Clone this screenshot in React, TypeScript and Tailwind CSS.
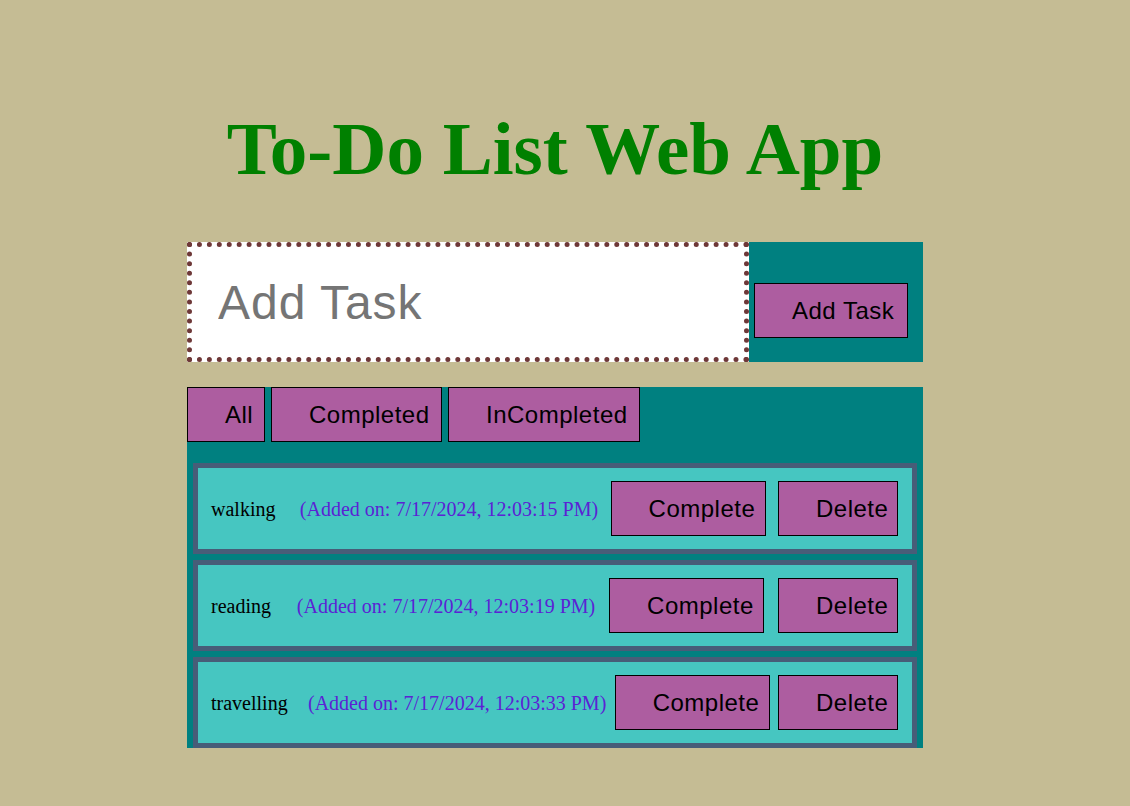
import React, { useState } from "react";

type Task = { id: number; name: string; added: string; done: boolean };

const initialTasks: Task[] = [
  { id: 1, name: "walking", added: "7/17/2024, 12:03:15 PM", done: false },
  { id: 2, name: "reading", added: "7/17/2024, 12:03:19 PM", done: false },
  { id: 3, name: "travelling", added: "7/17/2024, 12:03:33 PM", done: false },
];

const btn =
  "h-[55px] border border-black bg-[#ad5da0] pl-[37px] text-left text-[24px] tracking-[0.5px] text-black font-['Liberation_Sans',Arial,sans-serif]";

const App: React.FC = () => {
  const [tasks, setTasks] = useState<Task[]>(initialTasks);
  const [text, setText] = useState("");
  const [filter, setFilter] = useState<"all" | "done" | "todo">("all");

  const addTask = () => {
    if (!text.trim()) return;
    setTasks([
      ...tasks,
      { id: Date.now(), name: text.trim(), added: new Date().toLocaleString("en-US"), done: false },
    ]);
    setText("");
  };

  const shown = tasks.filter((t) =>
    filter === "all" ? true : filter === "done" ? t.done : !t.done
  );

  return (
    <div className="min-h-screen bg-[#c5bc94] pt-[111px]">
      <div className="ml-[187px] w-[736px]">
        <h1 className="text-center text-[75px] leading-[75px] font-bold text-[#008000] font-['Liberation_Serif','Times_New_Roman',serif]">
          To-Do List Web App
        </h1>

        <div className="mt-[56px] flex h-[120px] items-start bg-[#008080]">
          <input
            value={text}
            onChange={(e) => setText(e.target.value)}
            placeholder="Add Task"
            className="h-[120px] w-[562px] border-[5px] border-dotted border-[#6e3838] bg-white pl-[26px] text-[48px] tracking-[1px] text-black outline-none placeholder:text-[#757575] font-['Liberation_Sans',Arial,sans-serif]"
          />
          <button onClick={addTask} className={`${btn} ml-[5px] mt-[41px] w-[154px]`}>
            Add Task
          </button>
        </div>

        <div className="mt-[25px] bg-[#008080]">
          <div className="flex gap-[6px]">
            <button onClick={() => setFilter("all")} className={`${btn} w-[78px]`}>
              All
            </button>
            <button onClick={() => setFilter("done")} className={`${btn} w-[171px]`}>
              Completed
            </button>
            <button onClick={() => setFilter("todo")} className={`${btn} w-[192px]`}>
              InCompleted
            </button>
          </div>

          <ul className="mt-[21px] flex flex-col gap-[6px] px-[6px]">
            {shown.map((t) => (
              <li
                key={t.id}
                className="flex h-[91px] items-center justify-between border-[5px] border-[#475d78] bg-[#46c6c1] pl-[13px] pr-[14px] text-[20px] font-['Liberation_Serif','Times_New_Roman',serif]"
              >
                <span className={t.done ? "text-black line-through" : "text-black"}>{t.name}</span>
                <span className="ml-[12px] text-[#5b22d4]">(Added on: {t.added})</span>
                <button
                  onClick={() =>
                    setTasks(tasks.map((x) => (x.id === t.id ? { ...x, done: !x.done } : x)))
                  }
                  className={`${btn} w-[155px]`}
                >
                  Complete
                </button>
                <button
                  onClick={() => setTasks(tasks.filter((x) => x.id !== t.id))}
                  className={`${btn} w-[120px]`}
                >
                  Delete
                </button>
              </li>
            ))}
          </ul>
        </div>
      </div>
    </div>
  );
};

export default App;
